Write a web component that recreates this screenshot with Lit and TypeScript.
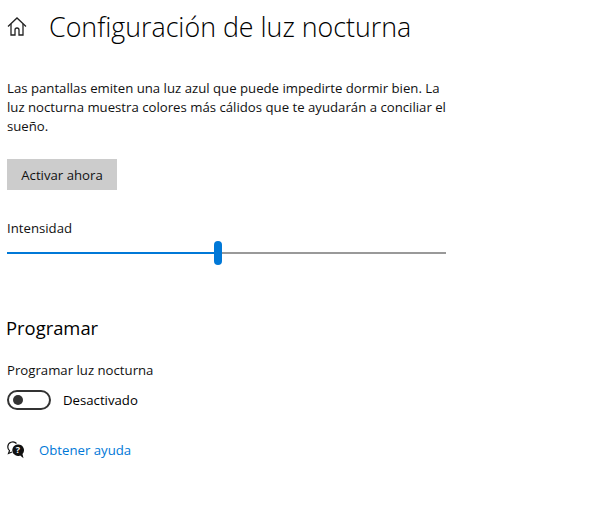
import { LitElement, html, css } from 'lit';
import { customElement } from 'lit/decorators.js';

@customElement('app-root')
export class AppRoot extends LitElement {
  static styles = css`
    :host {
      display: block;
      width: 595px;
      height: 523px;
      background: #fff;
      color: #000;
      font-family: "Open Sans", "Noto Sans", sans-serif;
      font-size: 13.2px;
      overflow: hidden;
    }
    .page {
      display: flex;
      flex-direction: column;
      align-items: flex-start;
      padding: 9px 0 0 7px;
    }
    .header {
      display: flex;
      align-items: center;
      height: 36px;
    }
    .home {
      width: 20px;
      height: 20px;
      margin-right: 22px;
    }
    h1 {
      margin: 0;
      font-size: 26.8px;
      font-weight: 300;
      line-height: 36px;
      white-space: nowrap;
    }
    p {
      margin: 34px 0 0;
      width: 445px;
      line-height: 19px;
      color: #111;
    }
    .button {
      margin-top: 23px;
      width: 110px;
      height: 31px;
      display: flex;
      align-items: center;
      justify-content: center;
      background: #ccc;
      color: #111;
    }
    .label {
      line-height: 18px;
      color: #111;
    }
    .intensity {
      margin-top: 29px;
    }
    .slider {
      margin-top: 4px;
      width: 439px;
      height: 24px;
      display: flex;
      align-items: center;
    }
    .fill {
      width: 207px;
      height: 2px;
      background: #0078d7;
    }
    .thumb {
      width: 8px;
      height: 24px;
      border-radius: 4px;
      background: #0078d7;
    }
    .rest {
      flex: 1;
      height: 2px;
      background: #999;
    }
    h2 {
      margin: 51px 0 0 -1px;
      font-size: 18.4px;
      font-weight: 400;
      line-height: 24px;
    }
    .schedule {
      margin-top: 21px;
    }
    .toggle-row {
      margin-top: 10px;
      display: flex;
      align-items: center;
      height: 22px;
    }
    .toggle {
      box-sizing: border-box;
      width: 44px;
      height: 20px;
      border: 2px solid #333;
      border-radius: 10px;
      margin-right: 12px;
      display: flex;
      align-items: center;
      padding-left: 4px;
    }
    .knob {
      width: 10px;
      height: 10px;
      border-radius: 50%;
      background: #333;
    }
    .help {
      margin-top: 28px;
      display: flex;
      align-items: center;
      height: 22px;
    }
    .help svg {
      width: 18px;
      height: 18px;
      margin-right: 14px;
    }
    .help span {
      color: #0078d7;
    }
  `;

  render() {
    return html`
      <div class="page">
        <div class="header">
          <svg class="home" viewBox="0 0 20 20" fill="none" stroke="#222" stroke-width="1.3">
            <path d="M1 9.500 10 1l9 8.500" />
            <path d="M4 7v11h4v-5a2 2 0 0 1 4 0v5h4V7" />
          </svg>
          <h1>Configuración de luz nocturna</h1>
        </div>
        <p>Las pantallas emiten una luz azul que puede impedirte dormir bien. La luz nocturna muestra colores más cálidos que te ayudarán a conciliar el sueño.</p>
        <div class="button">Activar ahora</div>
        <div class="label intensity">Intensidad</div>
        <div class="slider">
          <div class="fill"></div>
          <div class="thumb"></div>
          <div class="rest"></div>
        </div>
        <h2>Programar</h2>
        <div class="label schedule">Programar luz nocturna</div>
        <div class="toggle-row">
          <div class="toggle"><div class="knob"></div></div>
          <span>Desactivado</span>
        </div>
        <div class="help">
          <svg viewBox="0 0 18 18">
            <path d="M9.500 2.500A5 5 0 0 0 .8 6c0 1.500.6 2.700 1.700 3.600L1.500 12.500 5 11" fill="none" stroke="#111" stroke-width="1.200" />
            <path d="M11 3.500a5.700 5.700 0 0 0-3.900 9.800 5.700 5.700 0 0 0 6.100 1.100l3.300 2.800-1-4.200A5.700 5.700 0 0 0 11 3.500z" fill="#111" />
            <text x="11" y="12.300" font-size="9" font-weight="700" text-anchor="middle" fill="#fff" font-family="Open Sans, sans-serif">?</text>
          </svg>
          <span>Obtener ayuda</span>
        </div>
      </div>
    `;
  }
}
